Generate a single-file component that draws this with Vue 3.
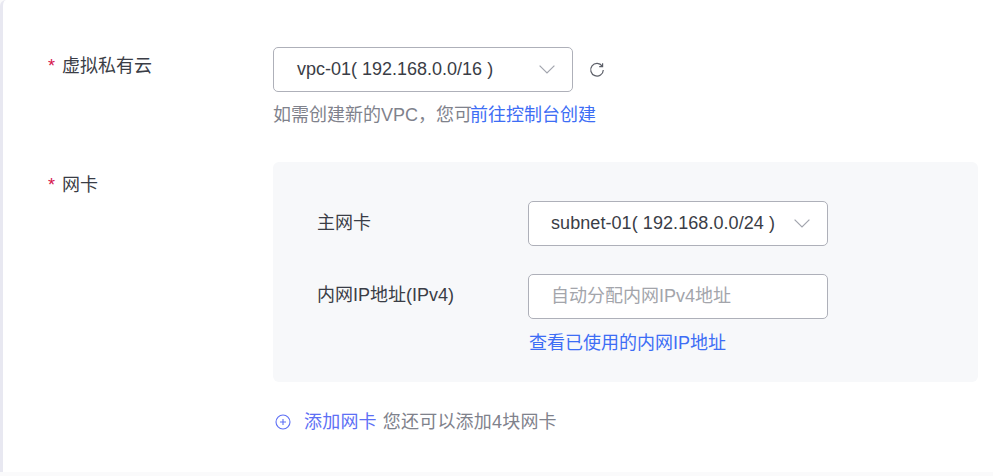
<template>
  <div class="page">
    <div class="card">
      <!-- VPC -->
      <div class="form-row vpc-row">
        <label class="form-label"><span class="required">*</span>虚拟私有云</label>
        <div class="form-control">
          <div class="select-line">
            <div class="select">
              <span class="select-value">{{ vpc }}</span>
              <svg class="arrow" viewBox="0 0 16 9" fill="none">
                <path d="M0.6 0.6 L8 8 L15.4 0.6" />
              </svg>
            </div>
            <svg class="refresh" viewBox="0 0 16 16" fill="none">
              <path d="M13.2 4.2 A6.3 6.3 0 1 0 14.3 8" />
              <path d="M13.6 1.2 V4.6 H10.2" />
            </svg>
          </div>
          <p class="hint">如需创建新的VPC，您可<a class="link hint-link">前往控制台创建</a></p>
        </div>
      </div>

      <!-- NIC -->
      <div class="form-row nic-row">
        <label class="form-label"><span class="required">*</span>网卡</label>
        <div class="form-control">
          <div class="nic-panel">
            <div class="nic-item">
              <span class="nic-label">主网卡</span>
              <div class="select subnet-select">
                <span class="select-value">{{ subnet }}</span>
                <svg class="arrow" viewBox="0 0 16 9" fill="none">
                  <path d="M0.6 0.6 L8 8 L15.4 0.6" />
                </svg>
              </div>
            </div>
            <div class="nic-item ip-item">
              <span class="nic-label">内网IP地址(IPv4)</span>
              <div class="ip-field">
                <input class="ip-input" type="text" placeholder="自动分配内网IPv4地址" />
                <a class="link used-link">查看已使用的内网IP地址</a>
              </div>
            </div>
          </div>
          <div class="add-nic">
            <svg class="plus" viewBox="0 0 16 16" fill="none">
              <circle cx="8" cy="8" r="7" />
              <path d="M5 8 H11 M8 5 V11" />
            </svg>
            <a class="add-link">添加网卡</a>
            <span class="add-tip">您还可以添加4块网卡</span>
          </div>
        </div>
      </div>
    </div>
  </div>
</template>

<script setup>
const vpc = 'vpc-01( 192.168.0.0/16 )'
const subnet = 'subnet-01( 192.168.0.0/24 )'
</script>

<style>
html,
body {
  margin: 0;
  background: #fafafb;
  overflow: hidden;
}
</style>

<style scoped>
.page {
  width: 993px;
  height: 476px;
  box-sizing: border-box;
  padding: 0 0 4px 0;
  background: #fafafb;
  font-family: "Liberation Sans", "Noto Sans CJK SC", sans-serif;
  font-size: 18px;
  font-weight: 400;
  color: #3a3d46;
}

.card {
  height: 100%;
  box-sizing: border-box;
  background: #fff;
  border-left: 3px solid #e8e8f1;
  border-top-left-radius: 6px;
  padding: 47px 15px 0 45px;
}

.form-row {
  display: flex;
}

.nic-row {
  margin-top: 34px;
}

.form-label {
  width: 225px;
  flex: none;
  line-height: 40px;
  margin-top: -1px;
}

.nic-row .form-label {
  margin-top: 2px;
}

.required {
  color: #d6134d;
  margin-right: 7px;
}

.form-control {
  flex: 1;
  min-width: 0;
}

.select-line {
  display: flex;
  align-items: center;
}

.select {
  width: 300px;
  height: 45px;
  box-sizing: border-box;
  display: flex;
  align-items: center;
  justify-content: space-between;
  padding: 0 17px 0 23px;
  background: #fff;
  border: 1px solid #aeb0b9;
  border-radius: 5px;
}

.subnet-select {
  padding-left: 22px;
  letter-spacing: 0.07px;
}

.select-value {
  white-space: nowrap;
}

.arrow {
  width: 16px;
  height: 9px;
  flex: none;
}

.arrow path {
  stroke: #a2a5ae;
  stroke-width: 1.2;
}

.refresh {
  width: 16px;
  height: 16px;
  margin-left: 16px;
}

.refresh path {
  stroke: #5c5f68;
  stroke-width: 1.2;
}

.hint {
  margin: 10px 0 0;
  line-height: 27px;
  color: #7f828c;
}

.link {
  color: #3d6df5;
  cursor: pointer;
}

.hint-link {
  margin-left: -2px;
}

.nic-panel {
  height: 220px;
  box-sizing: border-box;
  padding: 39px 0 0 45px;
  background: #f7f8fa;
  border-radius: 6px;
}

.nic-row .form-control {
  margin-top: -1px;
}

.nic-item {
  display: flex;
  align-items: center;
}

.nic-item > .nic-label {
  margin-top: -5px;
}

.ip-item {
  align-items: flex-start;
  margin-top: 28px;
}

.ip-item > .nic-label {
  margin-top: 1px;
}

.nic-label {
  width: 211px;
  flex: none;
  margin-left: -1px;
}

.ip-item .nic-label {
  line-height: 41px;
}

.ip-field {
  display: flex;
  flex-direction: column;
}

.ip-input {
  width: 300px;
  height: 45px;
  box-sizing: border-box;
  padding: 0 22px;
  font: inherit;
  color: inherit;
  background: #fff;
  border: 1px solid #aeb0b9;
  border-radius: 5px;
  outline: none;
}

.ip-input::placeholder {
  color: #a3a5ab;
  opacity: 1;
}

.used-link {
  margin: 11px 0 0 1px;
  line-height: 27px;
}

.add-nic {
  display: flex;
  align-items: center;
  margin-top: 27px;
  line-height: 27px;
}

.plus {
  width: 16px;
  height: 16px;
  margin: -1px 13px 0 2px;
}

.plus circle,
.plus path {
  stroke: #5d6ff5;
  stroke-width: 1.1;
}

.add-link {
  color: #5d6ff5;
  cursor: pointer;
  letter-spacing: 0.2px;
}

.add-tip {
  margin-left: 6px;
  color: #7f828c;
  letter-spacing: 0.2px;
}
</style>
